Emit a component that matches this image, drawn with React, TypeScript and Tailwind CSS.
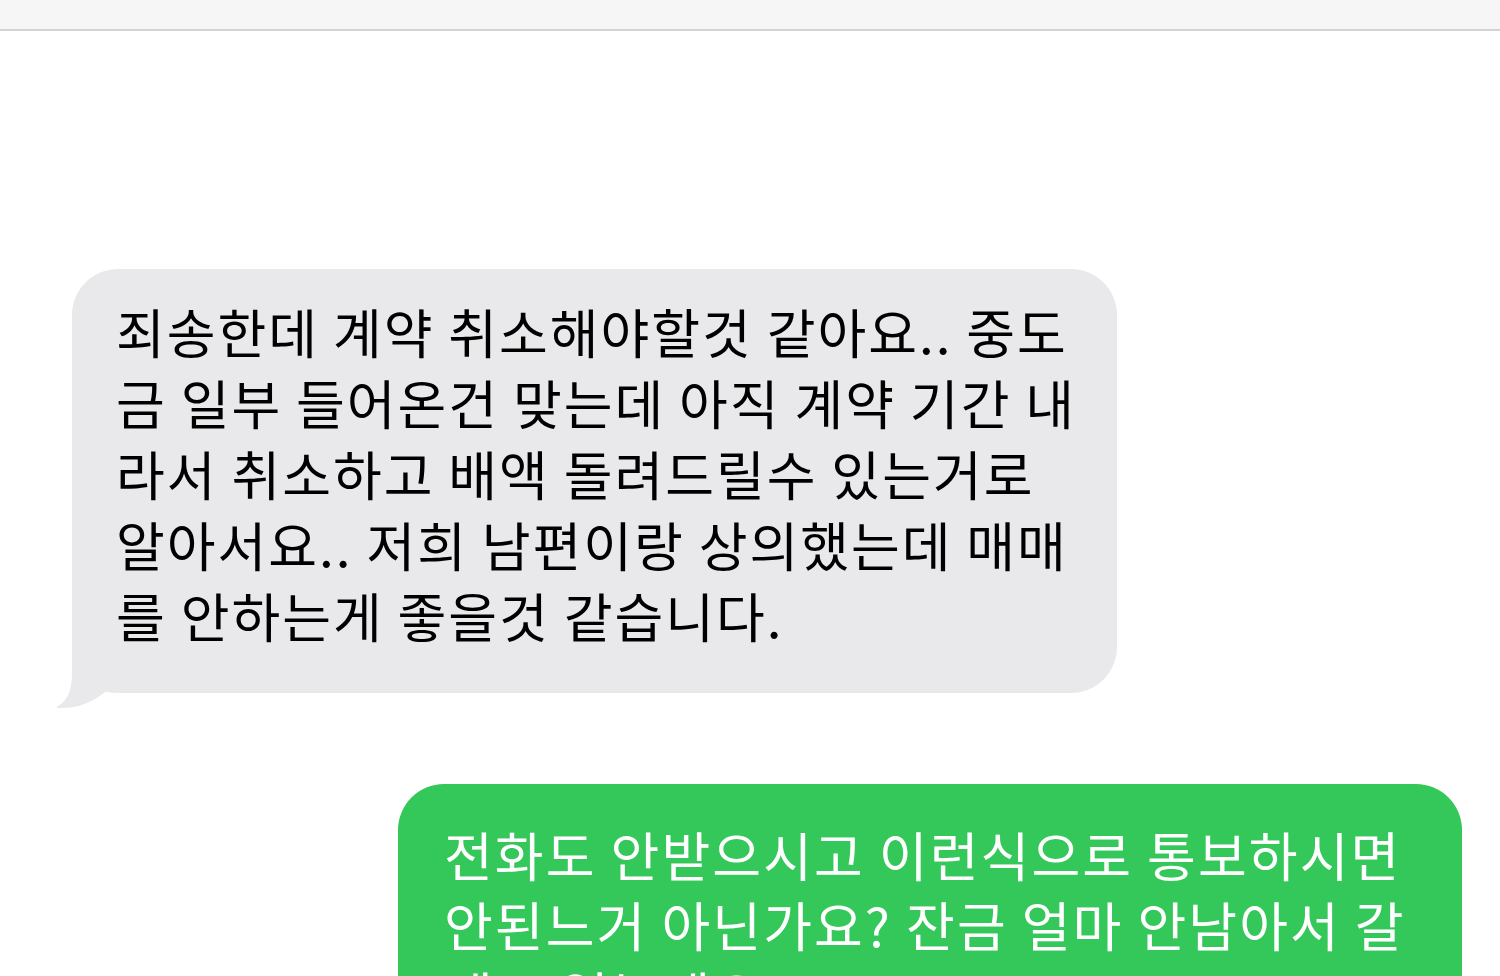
import React from 'react';

const font = { fontFamily: '"Noto Sans CJK KR", "Noto Sans", sans-serif' };

const received = [
  '죄송한데 계약 취소해야할것 같아요.. 중도',
  '금 일부 들어온건 맞는데 아직 계약 기간 내',
  '라서 취소하고 배액 돌려드릴수 있는거로',
  '알아서요.. 저희 남편이랑 상의했는데 매매',
  '를 안하는게 좋을것 같습니다.',
];

const sent = [
  '전화도 안받으시고 이런식으로 통보하시면',
  '안된느거 아닌가요? 잔금 얼마 안남아서 갈',
  '데도 없는데요',
];

const App = () => {
  return (
    <div className="w-full h-[976px] overflow-hidden bg-white" style={font}>
      {/* Top bar */}
      <div className="h-[31px] bg-[#f6f6f6] border-b-2 border-[#d3d3d3]" />

      {/* Received bubble */}
      <div className="relative ml-[72px] mt-[238px] w-[1045px]">
        <div className="relative z-10 bg-[#e9e9eb] rounded-[46px] pl-[44px] pt-[27px] pb-[42px] text-[53px] leading-[71px] tracking-[2px] text-black">
          {received.map((line, i) => (
            <div key={i} className="whitespace-nowrap">{line}</div>
          ))}
        </div>
        <svg
          className="absolute left-[-17px] top-[calc(100%-52px)]"
          width="72"
          height="72"
          viewBox="0 0 72 72"
        >
          <path
            d="M17,0 L17,32 C17,50 12,60 3,65 C1,66 1,67 4,67 C20,68 37,62 50,51 L72,52 L72,0 Z"
            fill="#e9e9eb"
          />
        </svg>
      </div>

      {/* Sent bubble */}
      <div className="ml-[398px] mt-[91px] w-[1064px] bg-[#34c759] rounded-[46px] pl-[46px] pt-[35px] pb-[40px] text-[53px] leading-[70px] tracking-[2.1px] text-white">
        {sent.map((line, i) => (
          <div key={i} className="whitespace-nowrap">{line}</div>
        ))}
      </div>
    </div>
  );
};

export default App;
